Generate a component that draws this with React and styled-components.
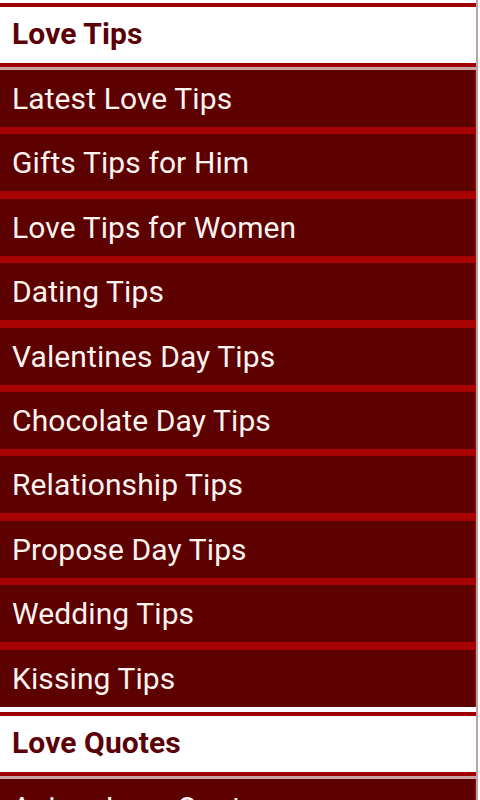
import React from "react";
import styled, { createGlobalStyle } from "styled-components";

const GlobalStyle = createGlobalStyle`
    html, body {
        margin: 0;
        padding: 0;
        background: #ffffff;
        font-family: Roboto, "Noto Sans", "Liberation Sans", sans-serif;
        overflow: hidden;
    }
`
const Page = styled.div`
    width: 478px;
    height: 800px;
    overflow: hidden;
    border-right: 2px solid #bda2a2;
    padding-top: 3px;
    box-sizing: border-box;
`
const Section = styled.div`
    margin-bottom: 5px;
`
const Header = styled.div`
    height: 56px;
    box-sizing: border-box;
    display: flex;
    align-items: center;
    padding: 0 0 3px 12px;
    background: #ffffff;
    border-top: 4px solid #a10000;
    border-bottom: 4px solid #a10000;
    box-shadow: 0 3px 0 #c6a3a3;
    margin-bottom: 3px;
    color: #5a0006;
    font-size: 30px;
    font-weight: bold;
    letter-spacing: 0.1px;
    height: 64px;
`
const List = styled.div`
    display: flex;
    flex-direction: column;
    gap: 7.4px;
    background: #a80202;
`
const Item = styled.div`
    height: 57px;
    display: flex;
    align-items: center;
    padding-left: 12px;
    margin-right: 1px;
    background: #5d0000;
    color: #fff3f0;
    font-size: 30px;
    letter-spacing: 0.1px;
    white-space: nowrap;
    cursor: pointer;
`

const sections = [
    {
        title: "Love Tips",
        items: [
            "Latest Love Tips",
            "Gifts Tips for Him",
            "Love Tips for Women",
            "Dating Tips",
            "Valentines Day Tips",
            "Chocolate Day Tips",
            "Relationship Tips",
            "Propose Day Tips",
            "Wedding Tips",
            "Kissing Tips",
        ],
    },
    {
        title: "Love Quotes",
        items: ["Anime Love Quotes", "Cute Love Quotes"],
    },
]

export default class App extends React.Component {
    render() {
        return (
            <Page>
                <GlobalStyle />
                {sections.map((s) => (
                    <Section key={s.title}>
                        <Header>{s.title}</Header>
                        <List>
                            {s.items.map((item) => (
                                <Item key={item}>{item}</Item>
                            ))}
                        </List>
                    </Section>
                ))}
            </Page>
        )
    }
}
